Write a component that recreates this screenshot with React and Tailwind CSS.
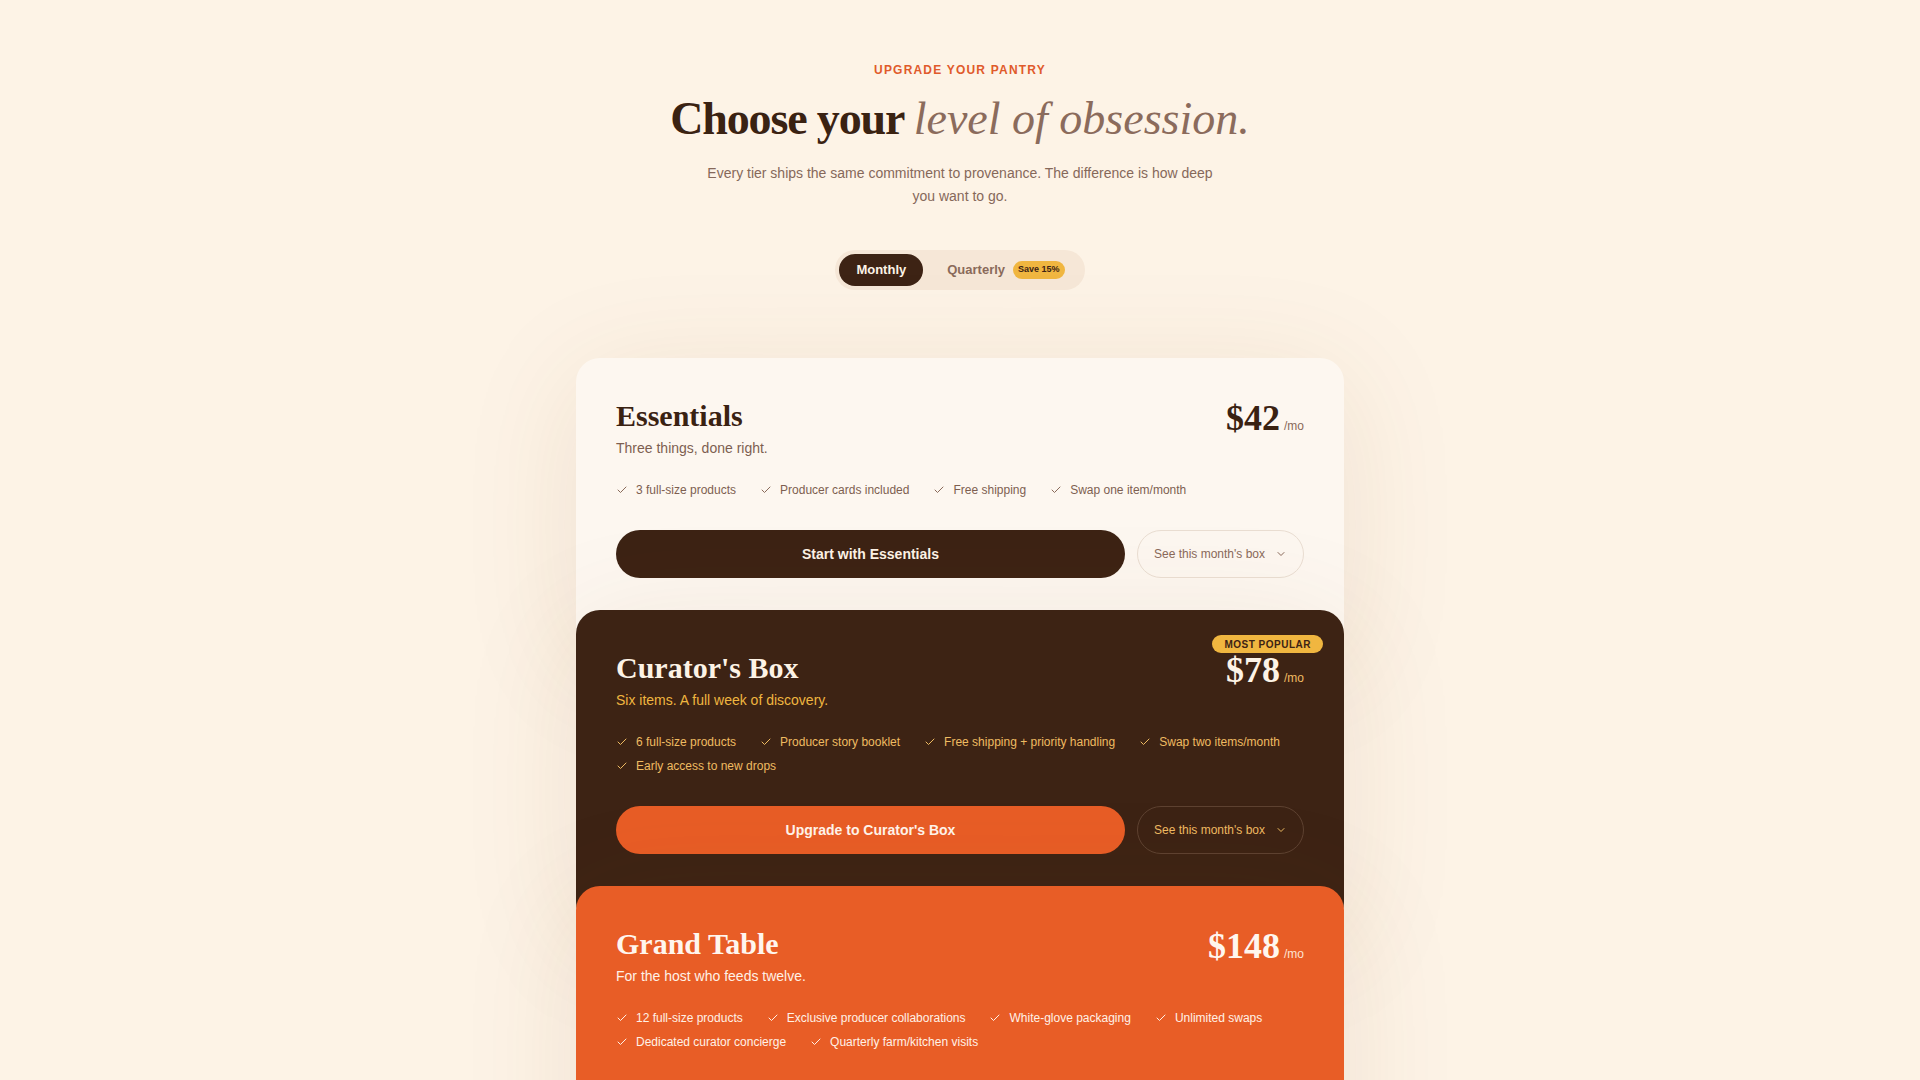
import React, { useState } from 'react';
import { Check, ChevronDown } from 'lucide-react';

const plans = [
  {
    id: 'essentials',
    name: 'Essentials',
    tagline: 'Three things, done right.',
    price: 42,
    cta: 'Start with Essentials',
    features: ['3 full-size products', 'Producer cards included', 'Free shipping', 'Swap one item/month'],
    card: 'bg-[#fdf7f0]',
    title: 'text-[#3a2212]',
    sub: 'text-[#7d5f50]',
    feat: 'text-[#7d5f50]',
    check: 'text-[#8a6a5a]',
    price_: 'text-[#3a2212]',
    per: 'text-[#8a6a5a]',
    primary: 'bg-[#3d2314] text-[#fdf3e6]',
    secondary: 'border-[#eaded2] text-[#8a6a5a]',
  },
  {
    id: 'curator',
    name: "Curator's Box",
    tagline: 'Six items. A full week of discovery.',
    price: 78,
    popular: true,
    cta: "Upgrade to Curator's Box",
    features: [
      '6 full-size products',
      'Producer story booklet',
      'Free shipping + priority handling',
      'Swap two items/month',
      'Early access to new drops',
    ],
    card: 'bg-[#3d2314]',
    title: 'text-[#fdf3e6]',
    sub: 'text-[#f0b640]',
    feat: 'text-[#efbb62]',
    check: 'text-[#efbb62]',
    price_: 'text-[#fdf3e6]',
    per: 'text-[#efbb62]',
    primary: 'bg-[#e85d26] text-[#fff4ea]',
    secondary: 'border-[#5e4231] text-[#efbb62]',
  },
  {
    id: 'grand',
    name: 'Grand Table',
    tagline: 'For the host who feeds twelve.',
    price: 148,
    cta: 'Reserve the Grand Table',
    features: [
      '12 full-size products',
      'Exclusive producer collaborations',
      'White-glove packaging',
      'Unlimited swaps',
      'Dedicated curator concierge',
      'Quarterly farm/kitchen visits',
    ],
    card: 'bg-[#e85d26]',
    title: 'text-[#fff6ee]',
    sub: 'text-[#fff1e6]',
    feat: 'text-[#fff1e6]',
    check: 'text-[#fff1e6]',
    price_: 'text-[#fff6ee]',
    per: 'text-[#fde3d2]',
    primary: 'bg-[#3d2314] text-[#fdf3e6]',
    secondary: 'border-[#f08a5e] text-[#fff1e6]',
  },
];

function PlanCard({ plan, first }) {
  return (
    <div
      className={`relative rounded-3xl px-10 pt-10 pb-[72px] shadow-[0_20px_120px_rgba(120,70,30,0.10)] ${plan.card} ${first ? '' : '-mt-10'}`}
    >
      {plan.popular && (
        <div className="absolute top-[25px] right-[21px] rounded-full bg-[#f0b640] px-3 h-[18px] flex items-center text-[10px] font-bold tracking-wider text-[#3d2314]">
          MOST POPULAR
        </div>
      )}
      <div className="flex items-start justify-between">
        <div>
          <h3 className={`font-['Liberation_Serif',serif] text-3xl font-bold leading-9 ${plan.title}`}>{plan.name}</h3>
          <p className={`mt-1 text-sm ${plan.sub}`}>{plan.tagline}</p>
        </div>
        <div className="flex items-baseline gap-1">
          <span className={`font-['Liberation_Serif',serif] text-4xl font-bold leading-10 ${plan.price_}`}>${plan.price}</span>
          <span className={`text-xs ${plan.per}`}>/mo</span>
        </div>
      </div>

      <ul className="mt-6 flex flex-wrap gap-x-6 gap-y-2">
        {plan.features.map((f) => (
          <li key={f} className={`flex items-center gap-2 text-xs ${plan.feat}`}>
            <Check size={12} strokeWidth={2} className={plan.check} />
            {f}
          </li>
        ))}
      </ul>

      <div className="mt-8 flex gap-3">
        <button className={`h-12 flex-1 rounded-full text-sm font-bold ${plan.primary}`}>{plan.cta}</button>
        <button className={`h-12 rounded-full border px-4 flex items-center gap-2.5 text-xs ${plan.secondary}`}>
          See this month's box
          <ChevronDown size={12} strokeWidth={2} />
        </button>
      </div>
    </div>
  );
}

export default function App() {
  const [billing, setBilling] = useState('monthly');

  return (
    <div className="min-h-screen bg-[#fdf3e6] font-['Liberation_Sans',Arial,sans-serif] pt-[61px] pb-24">
      <div className="mx-auto flex max-w-3xl flex-col items-center text-center">
        <div className="text-[12px] font-bold uppercase tracking-[0.1em] text-[#e05a2b]">Upgrade your pantry</div>
        <h1 className="mt-[14px] font-['Liberation_Serif',serif] text-[46px] leading-[52px] text-[#3a2212]">
          <span className="font-bold tracking-tight">Choose your </span>
          <span className="italic text-[#8b6b5c]">level of obsession.</span>
        </h1>
        <p className="mt-[17px] max-w-[512px] text-sm leading-[23px] text-[#86685a]">
          Every tier ships the same commitment to provenance. The difference is how deep you want to go.
        </p>

        <div className="mt-[42px] flex items-center rounded-full bg-[#f6e7d7] p-1">
          <button
            onClick={() => setBilling('monthly')}
            className={`h-8 rounded-full px-[17px] text-[13px] font-bold ${billing === 'monthly' ? 'bg-[#3d2314] text-[#fdf3e6]' : 'text-[#8a6a5a]'}`}
          >
            Monthly
          </button>
          <button
            onClick={() => setBilling('quarterly')}
            className={`ml-1 flex h-8 items-center gap-2 rounded-full pl-5 pr-4 text-[13px] font-bold ${billing === 'quarterly' ? 'bg-[#3d2314] text-[#fdf3e6]' : 'text-[#8a6a5a]'}`}
          >
            Quarterly
            <span className="rounded-full bg-[#f0b640] px-[5px] py-0.5 text-[9px] font-bold text-[#3d2314]">Save 15%</span>
          </button>
        </div>
      </div>

      <div className="mx-auto mt-[68px] max-w-3xl">
        {plans.map((p, i) => (
          <PlanCard key={p.id} plan={p} first={i === 0} />
        ))}
      </div>
    </div>
  );
}
